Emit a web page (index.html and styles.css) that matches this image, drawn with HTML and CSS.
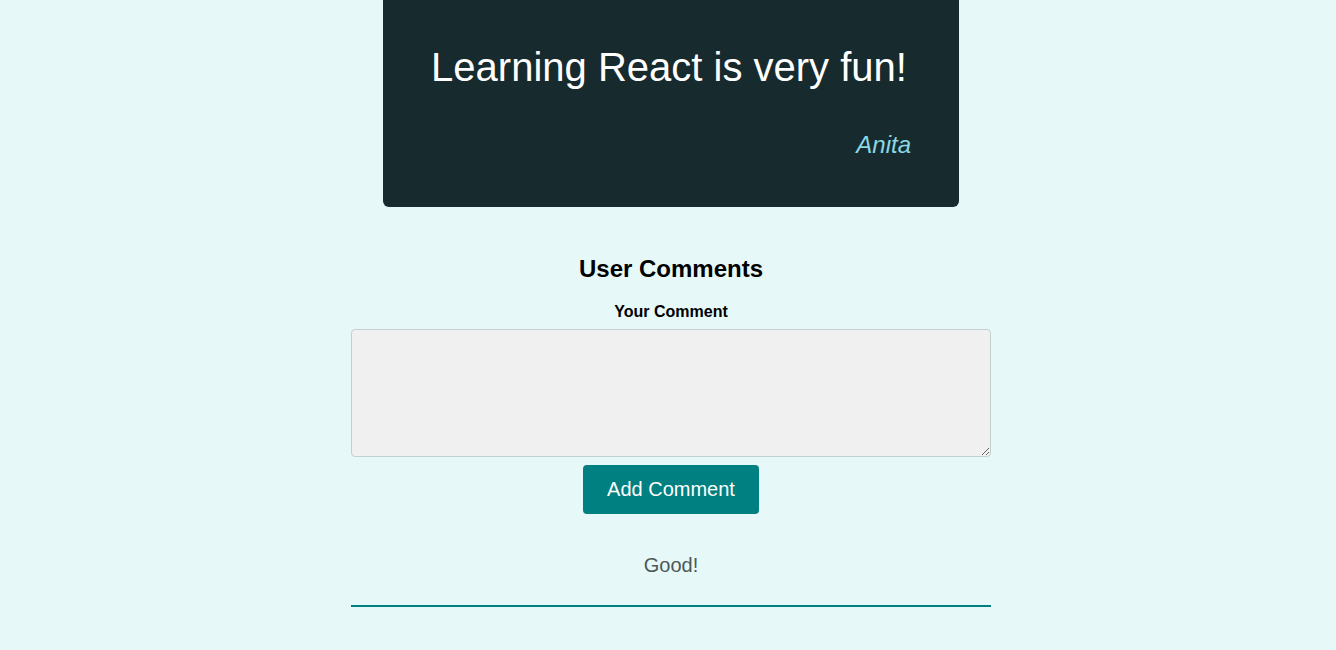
FILE: index.html
```html
<!DOCTYPE html>
<html lang="en">
<head>
<meta charset="utf-8">
<title>Quote</title>
<link rel="stylesheet" href="styles.css">
</head>
<body>
<div class="page">
  <div class="card">
    <p class="quote">Learning React is very fun!</p>
    <p class="author">Anita</p>
  </div>
  <section class="comments">
    <h2 class="comments-title">User Comments</h2>
    <form class="comment-form">
      <label class="form-label" for="comment">Your Comment</label>
      <textarea class="form-input" id="comment"></textarea>
      <button class="form-button" type="button">Add Comment</button>
    </form>
    <ul class="comment-list">
      <li class="comment-item">Good!</li>
    </ul>
  </section>
</div>
</body>
</html>
```

FILE: styles.css
```css
* { box-sizing: border-box; }
html, body {
  margin: 0;
  padding: 0;
  background: #e6f8f8;
  font-family: "Liberation Sans", Arial, sans-serif;
}
body { padding-left: 6px; }
.page {
  width: 640px;
  margin: 0 auto;
}
.card {
  width: 90%;
  margin: 0 auto;
  background: #172a2e;
  border-radius: 0 0 6px 6px;
  padding: 45px 26px 48px 22px;
  color: #ffffff;
}
.quote {
  margin: 0;
  font-size: 40px;
  text-align: center;
}
.author {
  margin: 41px 22px 0 0;
  font-size: 24px;
  font-style: italic;
  text-align: right;
  color: #8ad8e4;
}
.comments {
  margin-top: 48px;
  text-align: center;
}
.comments-title {
  margin: 0;
  font-size: 24px;
  font-weight: bold;
  color: #000;
}
.comment-form {
  display: flex;
  flex-direction: column;
  align-items: center;
  margin-top: 20px;
}
.form-label {
  font-size: 16px;
  font-weight: bold;
  color: #000;
}
.form-input {
  margin-top: 8px;
  width: 640px;
  height: 128px;
  background: #f0f0f0;
  border: 1px solid #c4d0d0;
  border-radius: 4px;
  font-family: inherit;
  font-size: 16px;
  display: block;
}
.form-button {
  margin-top: 8px;
  height: 49px;
  padding: 0 24px;
  background: #008080;
  color: #ffffff;
  border: none;
  border-radius: 4px;
  font-family: inherit;
  font-size: 20px;
}
.comment-list {
  list-style: none;
  margin: 40px 0 0;
  padding: 0;
}
.comment-item {
  font-size: 20px;
  color: #4b5858;
  padding-bottom: 28px;
  border-bottom: 2px solid #008080;
}
```
